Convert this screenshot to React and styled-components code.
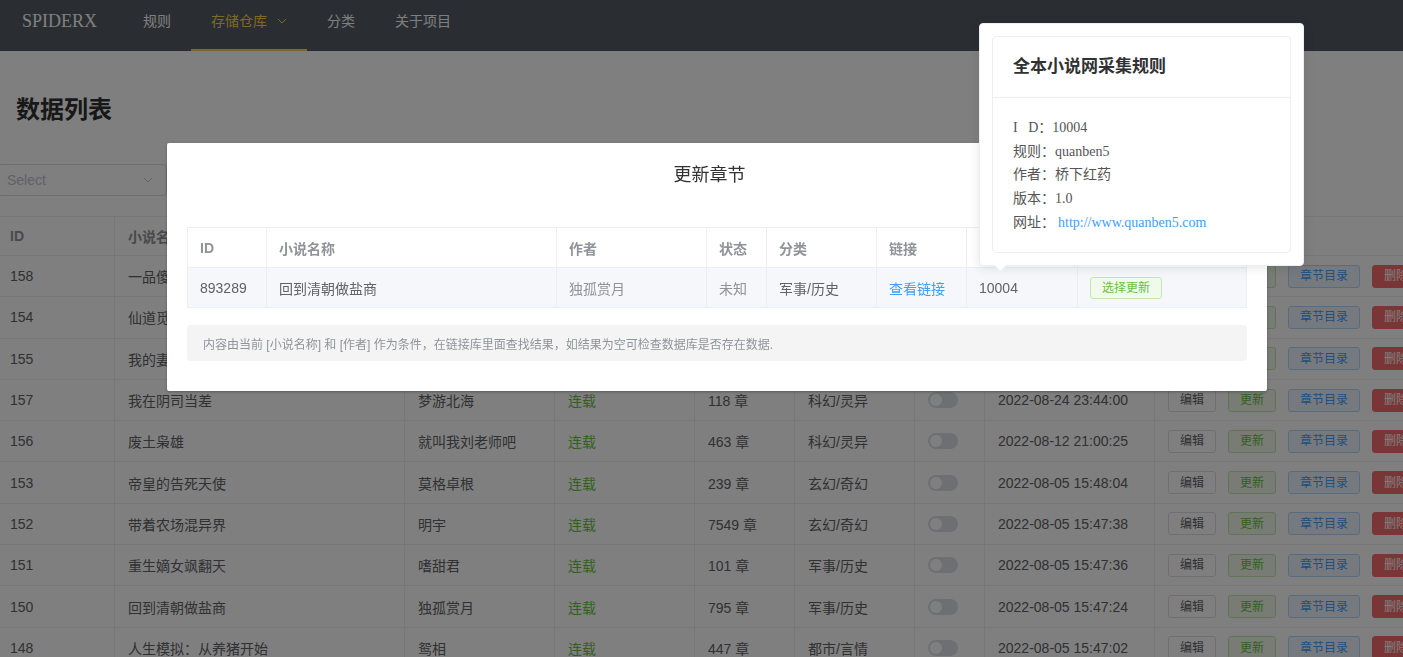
import React from "react";
import styled, { createGlobalStyle } from "styled-components";

const GlobalStyle = createGlobalStyle`
  * { box-sizing: border-box; }
  html, body { margin: 0; padding: 0; overflow: hidden; background: #fff; }
  body {
    width: 1403px; height: 657px;
    font-family: "Liberation Sans", "Noto Sans CJK SC", sans-serif;
    font-size: 14px; color: #606266;
  }
`;

const Page = styled.div`
  width: 1403px;
  height: 657px;
  overflow: hidden;
`;

const NavBar = styled.nav`
  display: flex;
  align-items: stretch;
  height: 51px;
  background: #545c64;
  padding-left: 22px;
`;

const Logo = styled.div`
  font-family: "Liberation Serif", serif;
  font-size: 18px;
  line-height: 20px;
  padding-top: 11px;
  margin-right: 26px;
  color: #fff;
`;

const NavItem = styled.div`
  display: flex;
  align-items: flex-start;
  gap: 10px;
  padding: 11px 20px 0;
  font-size: 14px;
  line-height: 20px;
  color: ${(p) => (p.$active ? "#ffd04b" : "#fff")};
  border-bottom: 2px solid ${(p) => (p.$active ? "#ffd04b" : "transparent")};
`;

const Main = styled.main`
  padding-top: 43px;
`;

const Title = styled.h2`
  margin: 0 0 0 16px;
  font-size: 24px;
  line-height: 32px;
  font-weight: 700;
  color: #303133;
`;

const Toolbar = styled.div`
  margin: 38px 0 0 -3px;
`;

const SelectBox = styled.div`
  display: flex;
  align-items: center;
  justify-content: space-between;
  width: 170px;
  height: 32px;
  padding: 0 13px 0 9px;
  border: 1px solid #dcdfe6;
  border-radius: 4px;
  color: #c0c4cc;
  font-size: 14px;
`;

const Table = styled.div`
  margin: 20px 0 0 -3px;
  width: 1438px;
  border-top: 1px solid #ebeef5;
`;

const Row = styled.div`
  display: grid;
  grid-template-columns: 118px 290px 150px 140px 100px 120px 70px 170px 280px;
  height: ${(p) => p.$h}px;
`;

const Cell = styled.div`
  display: flex;
  align-items: center;
  gap: 12px;
  padding: 0 13px;
  border-right: 1px solid #ebeef5;
  border-bottom: 1px solid #ebeef5;
  white-space: nowrap;
  overflow: hidden;
  font-weight: ${(p) => (p.$head ? 700 : 400)};
  color: ${(p) => (p.$head ? "#909399" : p.$tone === "green" ? "#67c23a" : "#606266")};
`;

const variants = {
  default: { bg: "#fff", border: "#dcdfe6", color: "#606266" },
  success: { bg: "#f0f9eb", border: "#c2e7b0", color: "#67c23a" },
  primary: { bg: "#ecf5ff", border: "#b3d8ff", color: "#409eff" },
  danger: { bg: "#f56c6c", border: "#f56c6c", color: "#fff" },
};

const Btn = styled.button`
  flex-shrink: 0;
  height: ${(p) => (p.$tall ? 22 : 23)}px;
  padding: 0 11px;
  font-family: inherit;
  font-size: 12px;
  line-height: 1;
  border-radius: 3px;
  border: 1px solid ${(p) => variants[p.$v].border};
  background: ${(p) => variants[p.$v].bg};
  color: ${(p) => variants[p.$v].color};
`;

const Switch = styled.span`
  position: relative;
  display: inline-block;
  width: 30px;
  height: 16px;
  border-radius: 8px;
  background: #dcdfe6;
  &::after {
    content: "";
    position: absolute;
    top: 2px;
    left: 2px;
    width: 12px;
    height: 12px;
    border-radius: 50%;
    background: #fff;
  }
`;

const Overlay = styled.div`
  position: fixed;
  inset: 0;
  background: rgba(0, 0, 0, 0.5);
`;

const Dialog = styled.div`
  position: fixed;
  top: 143px;
  left: 167px;
  width: 1100px;
  background: #fff;
  border-radius: 2px;
  box-shadow: 0 1px 3px rgba(0, 0, 0, 0.3);
`;

const DialogHeader = styled.div`
  padding: 20px 35px 10px 20px;
  text-align: center;
  font-size: 18px;
  line-height: 24px;
  color: #303133;
`;

const DialogBody = styled.div`
  padding: 30px 20px;
`;

const DTable = styled.div`
  border-top: 1px solid #ebeef5;
  border-left: 1px solid #ebeef5;
`;

const DRow = styled.div`
  display: grid;
  grid-template-columns: 79px 290px 150px 60px 110px 90px 111px 169px;
  height: 40px;
  background: ${(p) => (p.$hl ? "#f5f7fa" : "#fff")};
`;

const DCell = styled.div`
  display: flex;
  align-items: center;
  padding: 0 12px;
  border-right: 1px solid #ebeef5;
  border-bottom: 1px solid #ebeef5;
  white-space: nowrap;
  overflow: hidden;
  font-weight: ${(p) => (p.$head ? 700 : 400)};
  color: ${(p) =>
    p.$head ? "#909399" : p.$tone === "muted" ? "#909399" : p.$tone === "link" ? "#409eff" : "#606266"};
`;

const Alert = styled.div`
  display: flex;
  align-items: center;
  margin-top: 17px;
  height: 36px;
  padding: 0 16px;
  background: #f4f4f5;
  border-radius: 4px;
  font-size: 12px;
  color: #909399;
`;

const Popover = styled.div`
  position: fixed;
  top: 23px;
  left: 979px;
  width: 325px;
  padding: 12px;
  background: #fff;
  border: 1px solid #ebeef5;
  border-radius: 4px;
  box-shadow: 0 2px 12px rgba(0, 0, 0, 0.1);
  &::after {
    content: "";
    position: absolute;
    left: 16px;
    bottom: -5px;
    width: 8px;
    height: 8px;
    background: #fff;
    border-right: 1px solid #ebeef5;
    border-bottom: 1px solid #ebeef5;
    transform: rotate(45deg);
  }
`;

const Card = styled.div`
  border: 1px solid #ebeef5;
  border-radius: 4px;
  background: #fff;
`;

const CardHeader = styled.div`
  padding: 18px 20px;
  border-bottom: 1px solid #ebeef5;
  font-size: 17px;
  line-height: 24px;
  font-weight: 700;
  color: #303133;
`;

const CardBody = styled.div`
  padding: 18px 20px 17px;
  font-family: "Liberation Serif", "Noto Sans CJK SC", serif;
  font-size: 14px;
  color: #555;
`;

const InfoLine = styled.div`
  line-height: 23.7px;
  white-space: nowrap;
`;

const InfoLink = styled.span`
  color: #409eff;
  margin-left: 3px;
`;

const Chevron = ({ w = 10, h = 20, color = "currentColor" }) => (
  <svg width={w} height={h} viewBox={`0 0 ${w} ${h}`} fill="none">
    <path d={`M1 ${h / 2 - 2} L${w / 2} ${h / 2 + 2} L${w - 1} ${h / 2 - 2}`} stroke={color} strokeWidth="1" />
  </svg>
);

const rows = [
  { id: 158, name: "一品傻婿", author: "柳岸花又明", chap: "562 章", cat: "都市/言情", time: "2022-08-25 10:12:33" },
  { id: 154, name: "仙道觅长生", author: "风起闲云", chap: "325 章", cat: "仙侠/修真", time: "2022-08-25 09:40:12" },
  { id: 155, name: "我的妻子是大明星", author: "惊鸿", chap: "998 章", cat: "都市/言情", time: "2022-08-25 09:38:51" },
  { id: 157, name: "我在阴司当差", author: "梦游北海", chap: "118 章", cat: "科幻/灵异", time: "2022-08-24 23:44:00" },
  { id: 156, name: "废土枭雄", author: "就叫我刘老师吧", chap: "463 章", cat: "科幻/灵异", time: "2022-08-12 21:00:25" },
  { id: 153, name: "帝皇的告死天使", author: "莫格卓根", chap: "239 章", cat: "玄幻/奇幻", time: "2022-08-05 15:48:04" },
  { id: 152, name: "带着农场混异界", author: "明宇", chap: "7549 章", cat: "玄幻/奇幻", time: "2022-08-05 15:47:38" },
  { id: 151, name: "重生嫡女飒翻天", author: "嗜甜君", chap: "101 章", cat: "军事/历史", time: "2022-08-05 15:47:36" },
  { id: 150, name: "回到清朝做盐商", author: "独孤赏月", chap: "795 章", cat: "军事/历史", time: "2022-08-05 15:47:24" },
  { id: 148, name: "人生模拟：从养猪开始", author: "鸳相", chap: "447 章", cat: "都市/言情", time: "2022-08-05 15:47:02" },
];

const headers = ["ID", "小说名称", "作者", "状态", "章节", "分类", "推荐", "更新时间", "操作"];

export default function App() {
  return (
    <Page>
      <GlobalStyle />
      <NavBar>
        <Logo>SPIDERX</Logo>
        <NavItem>规则</NavItem>
        <NavItem $active>
          存储仓库
          <Chevron />
        </NavItem>
        <NavItem>分类</NavItem>
        <NavItem>关于项目</NavItem>
      </NavBar>

      <Main>
        <Title>数据列表</Title>
        <Toolbar>
          <SelectBox>
            <span>Select</span>
            <Chevron w={10} h={20} />
          </SelectBox>
        </Toolbar>

        <Table>
          <Row $h={39}>
            {headers.map((h) => (
              <Cell key={h} $head>
                {h}
              </Cell>
            ))}
          </Row>
          {rows.map((r) => (
            <Row key={r.id} $h={41.3}>
              <Cell>{r.id}</Cell>
              <Cell>{r.name}</Cell>
              <Cell>{r.author}</Cell>
              <Cell $tone="green">连载</Cell>
              <Cell>{r.chap}</Cell>
              <Cell>{r.cat}</Cell>
              <Cell>
                <Switch />
              </Cell>
              <Cell>{r.time}</Cell>
              <Cell>
                <Btn $v="default">编辑</Btn>
                <Btn $v="success">更新</Btn>
                <Btn $v="primary">章节目录</Btn>
                <Btn $v="danger">删除</Btn>
              </Cell>
            </Row>
          ))}
        </Table>
      </Main>

      <Overlay />

      <Dialog>
        <DialogHeader>更新章节</DialogHeader>
        <DialogBody>
          <DTable>
            <DRow>
              {["ID", "小说名称", "作者", "状态", "分类", "链接", "规则", "操作"].map((h) => (
                <DCell key={h} $head>
                  {h}
                </DCell>
              ))}
            </DRow>
            <DRow $hl>
              <DCell>893289</DCell>
              <DCell>回到清朝做盐商</DCell>
              <DCell $tone="muted">独孤赏月</DCell>
              <DCell $tone="muted">未知</DCell>
              <DCell>军事/历史</DCell>
              <DCell $tone="link">查看链接</DCell>
              <DCell>10004</DCell>
              <DCell>
                <Btn $v="success" $tall>
                  选择更新
                </Btn>
              </DCell>
            </DRow>
          </DTable>
          <Alert>
            内容由当前 [小说名称] 和 [作者] 作为条件，在链接库里面查找结果，如结果为空可检查数据库是否存在数据.
          </Alert>
        </DialogBody>
      </Dialog>

      <Popover>
        <Card>
          <CardHeader>全本小说网采集规则</CardHeader>
          <CardBody>
            <InfoLine>I{"\u00a0\u00a0\u00a0"}D：10004</InfoLine>
            <InfoLine>规则：quanben5</InfoLine>
            <InfoLine>作者：桥下红药</InfoLine>
            <InfoLine>版本：1.0</InfoLine>
            <InfoLine>
              网址：<InfoLink>http://www.quanben5.com</InfoLink>
            </InfoLine>
          </CardBody>
        </Card>
      </Popover>
    </Page>
  );
}
